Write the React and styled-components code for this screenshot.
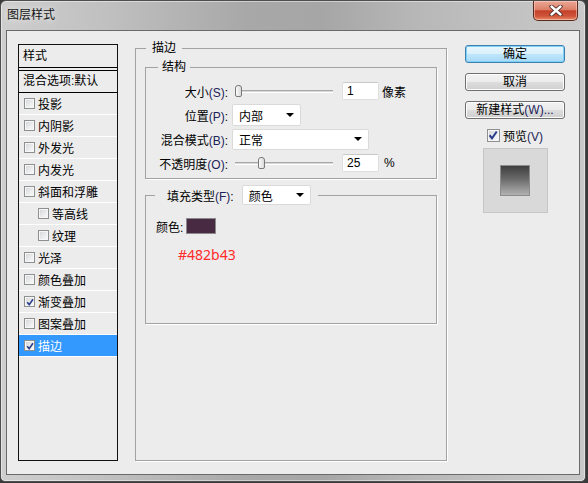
import React from 'react';
import styled, { createGlobalStyle } from 'styled-components';

const GlobalStyle = createGlobalStyle`
  html, body { margin: 0; padding: 0; }
  body {
    width: 588px;
    height: 483px;
    overflow: hidden;
    background: #3a3a3a;
    font-family: "Liberation Sans", "Noto Sans CJK SC", sans-serif;
    font-size: 12px;
    color: #000;
  }
`;

const Window = styled.div`
  box-sizing: border-box;
  width: 586px;
  height: 482px;
  border: 1px solid #4e4e4e;
  border-radius: 6px 6px 5px 5px;
  background: linear-gradient(90deg, #cecece 0%, #c0c0c0 18%, #a8a8a8 42%, #a6a6a6 55%, #b8b8b8 72%, #c2c2c2 88%, #c9c9c9 100%);
  box-shadow: inset 0 0 0 1px rgba(255, 255, 255, 0.45);
  display: flex;
  flex-direction: column;
`;

const TitleBar = styled.div`
  height: 29px;
  display: flex;
  align-items: flex-start;
  justify-content: space-between;
  padding: 0 7px 0 6px;
`;

const Title = styled.div`
  line-height: 29px;
  color: #141414;
  text-shadow: 0 0 6px rgba(255, 255, 255, 0.9);
`;

const CloseButton = styled.div`
  box-sizing: border-box;
  width: 45px;
  height: 20px;
  border: 1px solid #5a2a20;
  border-top: none;
  border-radius: 0 0 5px 5px;
  background: linear-gradient(#eaa895 0%, #dd8069 45%, #c4412a 52%, #d1553a 80%, #e58c66 100%);
  box-shadow: inset 0 0 0 1px rgba(255, 220, 210, 0.5);
  display: flex;
  align-items: center;
  justify-content: center;
`;

const Client = styled.div`
  flex: 1;
  margin: 0 5px 6px;
  border: 1px solid #6a6a6a;
  background: #ececec;
  display: flex;
  align-items: flex-start;
  padding: 10px 0 0 11px;
`;

/* ---------- left style list ---------- */

const StyleList = styled.div`
  box-sizing: border-box;
  width: 100px;
  height: 417px;
  margin-top: 3px;
  border: 1px solid #111;
  background: #ececec;
  display: flex;
  flex-direction: column;
`;

const ListHeader = styled.div`
  height: 22px;
  line-height: 22px;
  padding-left: 4px;
  border-bottom: 1px solid #000;
  margin-bottom: 2px;
`;

const BlendRow = styled.div`
  height: 21px;
  line-height: 21px;
  padding-left: 4px;
  border-top: 1px solid #000;
  border-bottom: 1px solid #000;
`;

const ListRow = styled.div`
  height: 21px;
  border-bottom: 1px solid #fff;
  display: flex;
  align-items: center;
  gap: 3px;
  padding-left: ${p => (p.$sub ? 19 : 5)}px;
  background: ${p => (p.$selected ? '#3399ff' : 'transparent')};
  color: ${p => (p.$selected ? '#fff' : '#000')};
`;

const Box = styled.span`
  box-sizing: border-box;
  width: ${p => p.$size}px;
  height: ${p => p.$size}px;
  border: 1px solid #8e8f8f;
  background: linear-gradient(135deg, #d0d2d4 0%, #eceef0 60%, #fafafa 100%);
  box-shadow: inset 0 0 0 1px #f6f6f6;
  display: inline-flex;
  align-items: center;
  justify-content: center;
  flex-shrink: 0;
`;

const Check = ({ checked, size = 11 }) => (
  <Box $size={size}>
    {checked && (
      <svg width={size - 3} height={size - 3} viewBox="0 0 8 8">
        <path d="M1.2 4.2 L3.2 6.6 L7 1.2" fill="none" stroke="#2b3e8c" strokeWidth="1.6" />
      </svg>
    )}
  </Box>
);

/* ---------- main panel ---------- */

const Group = styled.fieldset`
  box-sizing: border-box;
  margin: 0;
  padding: 0;
  min-width: 0;
  border: 1px solid #a2a2a2;
  box-shadow: 1px 1px 0 #fff;
`;

const MainGroup = styled(Group)`
  width: 312px;
  height: 420px;
  margin-left: 17px;
`;

const StructGroup = styled(Group)`
  width: 292px;
`;

const FillGroup = styled(Group)`
  width: 292px;
  height: 139px;
  margin-top: 6px;
`;

const Legend = styled.legend`
  margin-left: ${p => p.$offset}px;
  padding: 0 ${p => p.$pad}px;
  line-height: 14px;
`;

const FillLegend = styled.legend`
  margin-left: 9px;
  padding: 0 7px 0 12px;
  display: flex;
  align-items: center;
  gap: 8px;
  height: 20px;
`;

const GroupBody = styled.div`
  padding: 5px 9px 0;
`;

const Rows = styled.div`
  padding: 5px 0 3px;
  display: flex;
  flex-direction: column;
`;

const Row = styled.div`
  height: 24px;
  display: flex;
  align-items: center;
`;

const Label = styled.span`
  width: 82px;
  text-align: right;
  white-space: nowrap;
  flex-shrink: 0;
`;

const Key = styled.span`
  color: #1c2358;
`;

const Slider = styled.div`
  position: relative;
  width: 98px;
  height: 14px;
  margin-left: 7px;
  display: flex;
  align-items: center;
`;

const Track = styled.div`
  width: 100%;
  height: 1px;
  background: #d6d6d6;
  border-top: 1px solid #a9a9a9;
  border-bottom: 1px solid #fff;
`;

const Thumb = styled.div`
  position: absolute;
  top: 1px;
  left: ${p => p.$pos}px;
  box-sizing: border-box;
  width: 7px;
  height: 12px;
  border: 1px solid #7a7a7a;
  border-radius: 3px 3px 2px 2px;
  background: linear-gradient(90deg, #fafafa, #d9d9d9);
`;

const NumBox = styled.div`
  box-sizing: border-box;
  width: 37px;
  height: 18px;
  margin-left: 9px;
  padding-left: 4px;
  line-height: 16px;
  background: #fff;
  border: 1px solid #dedede;
  border-top-color: #c9c9c9;
  border-radius: 2px;
`;

const Unit = styled.span`
  margin-left: ${p => p.$gap}px;
`;

const SelectBox = styled.div`
  box-sizing: border-box;
  width: ${p => p.$w}px;
  height: ${p => p.$h}px;
  margin-left: ${p => p.$ml || 0}px;
  padding: 0 6px 0 6px;
  background: #fff;
  border: 1px solid #dadada;
  border-radius: 2px;
  display: flex;
  align-items: center;
  justify-content: space-between;
`;

const Arrow = styled.span`
  width: 0;
  height: 0;
  border-left: 4px solid transparent;
  border-right: 4px solid transparent;
  border-top: 4px solid #000;
`;

const Select = ({ w, h, ml, children }) => (
  <SelectBox $w={w} $h={h} $ml={ml}>
    <span>{children}</span>
    <Arrow />
  </SelectBox>
);

const ColorRow = styled.div`
  display: flex;
  align-items: center;
  height: 18px;
  padding: 12px 0 0 10px;
`;

const Swatch = styled.span`
  box-sizing: border-box;
  width: 30px;
  height: 16px;
  margin-left: 3px;
  background: #482b43;
  border: 1px solid #8a8a8a;
`;

const HexNote = styled.div`
  margin: 12px 0 0 32px;
  font-family: "Noto Sans", "Liberation Sans", sans-serif;
  font-size: 14px;
  line-height: 16px;
  color: #ff2a2a;
`;

/* ---------- right column ---------- */

const Side = styled.div`
  width: 100px;
  margin: 4px 0 0 18px;
  display: flex;
  flex-direction: column;
  gap: 10px;
`;

const Button = styled.div`
  box-sizing: border-box;
  height: 18px;
  line-height: 16px;
  text-align: center;
  white-space: nowrap;
  border: 1px solid ${p => (p.$primary ? '#3c7fb1' : '#707070')};
  border-radius: 3px;
  background: ${p =>
    p.$primary
      ? 'linear-gradient(#eaf6fd 0%, #d9f0fc 50%, #bee6fd 51%, #a7d9f5 100%)'
      : 'linear-gradient(#f2f2f2 0%, #ebebeb 50%, #dddddd 51%, #cfcfcf 100%)'};
  box-shadow: inset 0 0 0 1px ${p => (p.$primary ? '#7fd2f5' : '#fcfcfc')};
`;

const PreviewToggle = styled.label`
  height: 14px;
  margin-top: -1px;
  display: flex;
  align-items: center;
  justify-content: center;
  gap: 3px;
`;

const PreviewBox = styled.div`
  box-sizing: border-box;
  width: 65px;
  height: 65px;
  margin-top: -4px;
  align-self: center;
  background: #d9d9d9;
  border: 1px solid #c6c6c6;
  display: flex;
  align-items: center;
  justify-content: center;
`;

const PreviewSwatch = styled.div`
  box-sizing: border-box;
  width: 30px;
  height: 31px;
  border: 1px solid #8c8c8c;
  background: linear-gradient(#3e3e3e 0%, #6a6a6a 45%, #b2b2b2 100%);
`;

const styles = [
  { name: '投影' },
  { name: '内阴影' },
  { name: '外发光' },
  { name: '内发光' },
  { name: '斜面和浮雕' },
  { name: '等高线', sub: true },
  { name: '纹理', sub: true },
  { name: '光泽' },
  { name: '颜色叠加' },
  { name: '渐变叠加', checked: true },
  { name: '图案叠加' },
  { name: '描边', checked: true, selected: true },
];

const SLIDER_W = 98 - 7;

export default function App() {
  return (
    <>
      <GlobalStyle />
      <Window>
        <TitleBar>
          <Title>图层样式</Title>
          <CloseButton>
            <svg width="14" height="11" viewBox="0 0 14 11">
              <path d="M2.5 1.5 L11.5 9.5 M11.5 1.5 L2.5 9.5" stroke="#4a2a24" strokeWidth="4.2" strokeLinecap="round" />
              <path d="M2.5 1.5 L11.5 9.5 M11.5 1.5 L2.5 9.5" stroke="#fff" strokeWidth="2.4" strokeLinecap="round" />
            </svg>
          </CloseButton>
        </TitleBar>

        <Client>
          <StyleList>
            <ListHeader>样式</ListHeader>
            <BlendRow>混合选项:默认</BlendRow>
            {styles.map(s => (
              <ListRow key={s.name} $sub={s.sub} $selected={s.selected}>
                <Check checked={s.checked} />
                <span>{s.name}</span>
              </ListRow>
            ))}
          </StyleList>

          <MainGroup>
            <Legend $offset={10} $pad={6}>描边</Legend>
            <GroupBody>
              <StructGroup>
                <Legend $offset={12} $pad={4}>结构</Legend>
                <Rows>
                  <Row>
                    <Label>大小<Key>(S)</Key>:</Label>
                    <Slider>
                      <Track />
                      <Thumb $pos={0} />
                    </Slider>
                    <NumBox>1</NumBox>
                    <Unit $gap={3}>像素</Unit>
                  </Row>
                  <Row>
                    <Label>位置<Key>(P)</Key>:</Label>
                    <Select w={69} h={22} ml={4}>内部</Select>
                  </Row>
                  <Row>
                    <Label>混合模式<Key>(B)</Key>:</Label>
                    <Select w={137} h={21} ml={4}>正常</Select>
                  </Row>
                  <Row>
                    <Label>不透明度<Key>(O)</Key>:</Label>
                    <Slider>
                      <Track />
                      <Thumb $pos={Math.round(SLIDER_W * 0.25)} />
                    </Slider>
                    <NumBox>25</NumBox>
                    <Unit $gap={5}>%</Unit>
                  </Row>
                </Rows>
              </StructGroup>

              <FillGroup>
                <FillLegend>
                  <span>填充类型<Key>(F)</Key>:</span>
                  <Select w={69} h={20}>颜色</Select>
                </FillLegend>
                <ColorRow>
                  <span>颜色:</span>
                  <Swatch />
                </ColorRow>
                <HexNote>#482b43</HexNote>
              </FillGroup>
            </GroupBody>
          </MainGroup>

          <Side>
            <Button $primary>确定</Button>
            <Button>取消</Button>
            <Button>新建样式<Key>(W)...</Key></Button>
            <PreviewToggle>
              <Check checked size={13} />
              <span>预览<Key>(V)</Key></span>
            </PreviewToggle>
            <PreviewBox>
              <PreviewSwatch />
            </PreviewBox>
          </Side>
        </Client>
      </Window>
    </>
  );
}
